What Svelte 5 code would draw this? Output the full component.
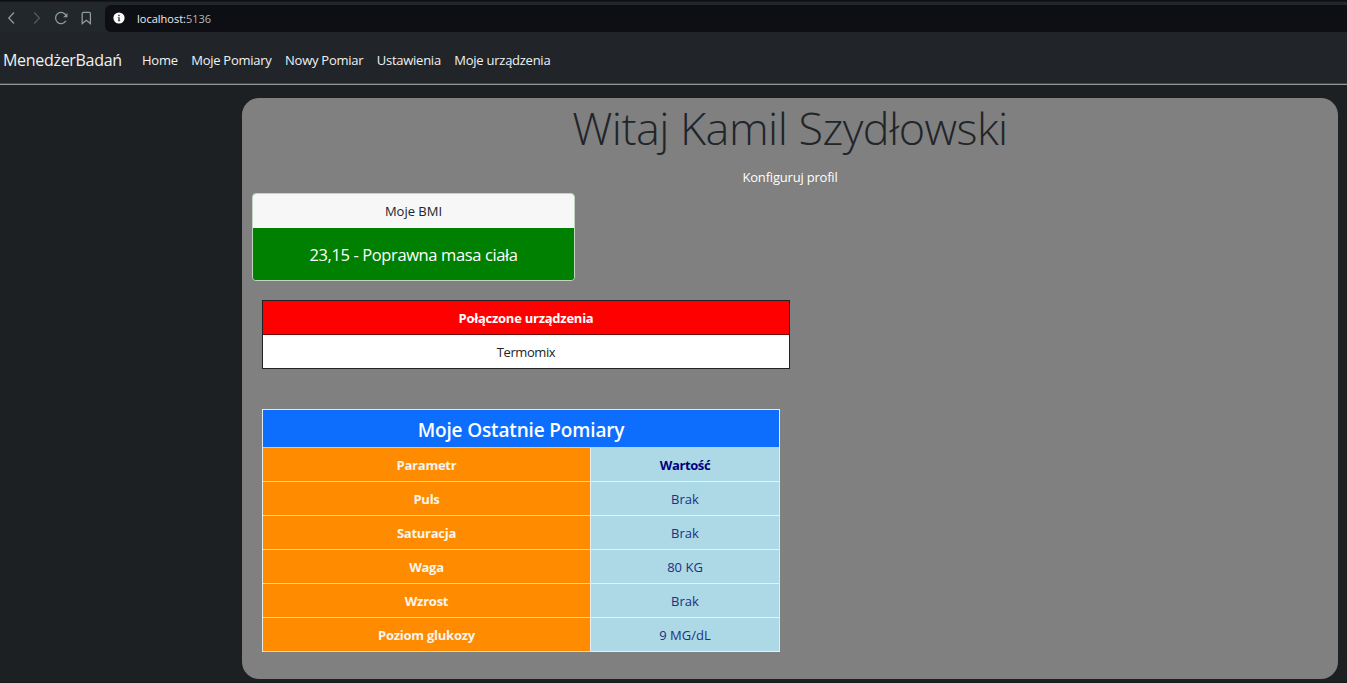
<script>
  const links = ['Home', 'Moje Pomiary', 'Nowy Pomiar', 'Ustawienia', 'Moje urządzenia'];
  const measurements = [
    ['Puls', 'Brak'],
    ['Saturacja', 'Brak'],
    ['Waga', '80 KG'],
    ['Wzrost', 'Brak'],
    ['Poziom glukozy', '9 MG/dL'],
  ];
</script>

<div class="page">
  <div class="browser">
    <div class="tools">
      <svg viewBox="0 0 100 26" width="100" height="26" fill="none" stroke="#8f9a9b" stroke-width="1.3">
        <path d="M14 7.5 8.8 13l5.2 5.5" />
        <path d="M34.2 7.5 39.4 13l-5.2 5.5" stroke="#515a5c" />
        <path d="M66.2 10.6A5.6 5.6 0 1 0 66 15.8" />
        <path d="M67.5 8.1v4.2h-4.3z" fill="#8f9a9b" stroke="none" />
        <path d="M82.2 8.6q0-1.3 1.3-1.3h5.6q1.3 0 1.3 1.3v10l-4.1-3.3-4.1 3.3z" />
      </svg>
    </div>
    <div class="address">
      <svg viewBox="0 0 12 12" width="12" height="12">
        <circle cx="6" cy="6" r="5.6" fill="#fff" />
        <path d="M5.2 2.8h1.5v1.4H5.2zM4.8 5.2h1.9v3.2h.6v.8H4.8v-.8h.5V6h-.5z" fill="#33363b" />
      </svg>
      <span class="url">localhost:<span>5136</span></span>
    </div>
  </div>

  <nav>
    <a class="brand" href="#home">MenedżerBadań</a>
    <div class="links">
      {#each links as link}
        <a href="#{link}">{link}</a>
      {/each}
    </div>
  </nav>

  <main>
    <h1>Witaj Kamil Szydłowski</h1>
    <a class="profile" href="#profil">Konfiguruj profil</a>

    <section class="card">
      <div class="card-header">Moje BMI</div>
      <div class="card-body">23,15 - Poprawna masa ciała</div>
    </section>

    <section class="devices">
      <div class="device-title">Połączone urządzenia</div>
      <div class="device">Termomix</div>
    </section>

    <section class="results">
      <h2>Moje Ostatnie Pomiary</h2>
      <div class="row head"><b>Parametr</b><span>Wartość</span></div>
      {#each measurements as [name, value]}
        <div class="row"><b>{name}</b><span>{value}</span></div>
      {/each}
    </section>
  </main>
</div>

<style>
  :global(body) { margin: 0; overflow: hidden; background: #1c2023; }
  * { box-sizing: border-box; }
  a { color: inherit; text-decoration: none; }
  .page {
    height: 683px;
    font-family: "Open Sans", "Noto Sans", sans-serif;
    font-size: 13px;
    color: #212529;
    white-space: nowrap;
    overflow: hidden;
    border-bottom: 1px solid #171a1c;
  }
  .browser {
    height: 32px;
    padding-top: 5px;
    display: flex;
    background: linear-gradient(#0e0f14 0 1px, #15181c 1px 2px, #22272b 2px);
  }
  .tools { width: 105px; }
  .tools svg { display: block; }
  .address {
    flex: 1;
    height: 27px;
    padding: 0 0 1px 8px;
    display: flex;
    align-items: center;
    gap: 12px;
    background: #0e0f14;
    border-radius: 6px 0 0 6px;
    color: #eef0f1;
    font-size: 11px;
    font-weight: 500;
  }
  .url span { color: #b4b7bb; font-weight: 400; }
  nav {
    height: 53px;
    padding: 3px 0 0 3px;
    display: flex;
    align-items: center;
    color: #f0f1f2;
    background: #212529;
    border-bottom: 1px solid #909596;
    box-shadow: inset 0 -1px #42474a;
    letter-spacing: -0.22px;
  }
  .brand { width: 139px; font-size: 16px; letter-spacing: -0.3px; }
  .links { display: flex; gap: 13.5px; font-weight: 500; }
  .links a { letter-spacing: -0.26px; }
  main {
    width: 1096px;
    height: 581px;
    margin: 13px 0 0 242px;
    padding: 0 10px;
    background: #808080;
    border-radius: 17px;
    display: flex;
    flex-direction: column;
  }
  h1 {
    height: 62px;
    margin: 0;
    line-height: 60px;
    text-align: center;
    font-size: 45px;
    font-weight: 300;
    letter-spacing: -0.55px;
  }
  .profile { height: 33px; line-height: 34px; text-align: center; color: #fff; letter-spacing: -0.2px; }
  .card {
    width: 323px;
    height: 88px;
    border: 1px solid #c2d5c2;
    border-radius: 4px;
    overflow: hidden;
    text-align: center;
  }
  .card-header {
    height: 34px;
    line-height: 34px;
    background: #f7f7f7;
  }
  .card-body {
    height: 52px;
    line-height: 53px;
    background: #008000;
    color: #fff;
    font-size: 16.5px;
    letter-spacing: -0.38px;
  }
  .devices {
    width: 528px;
    height: 69px;
    margin: 19px 0 0 10px;
    border: 1px solid #222;
    text-align: center;
    line-height: 34px;
    letter-spacing: -0.4px;
    background: #fff;
  }
  .device-title { height: 34px; background: #f00; border-bottom: 1px solid #700; color: #fff; font-weight: 700; letter-spacing: -0.25px; }
  .results {
    width: 518px;
    margin: 40px 0 0 10px;
    border: 1px solid #e3eaed;
    border-bottom: 0;
    text-align: center;
  }
  h2 {
    height: 38px;
    margin: 0;
    line-height: 40px;
    font-size: 19px;
    font-weight: 600;
    letter-spacing: -0.15px;
    color: #fff;
    background: #0d6efd;
    border-bottom: 1px solid #b7d2e6;
  }
  .row { height: 34px; display: grid; grid-template: 34px / 328px 1fr; line-height: 34px; }
  .row b { background: #ff8c00; color: #f8f4ef; border-right: 1px solid #eee; border-bottom: 1px solid #ffd3a0; letter-spacing: -0.25px; }
  .row span { background: #add8e6; color: #203080; border-bottom: 1px solid #e2f2f7; }
  .row.head span { font-weight: 700; color: #000080; letter-spacing: -0.4px; }
</style>
